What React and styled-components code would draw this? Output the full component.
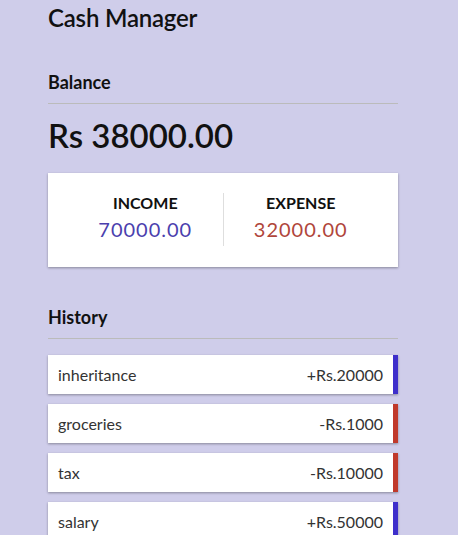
import React from "react";
import styled, { createGlobalStyle } from "styled-components";

const GlobalStyle = createGlobalStyle`
  body {
    margin: 0;
    background-color: #cfcdea;
    font-family: Lato, "Open Sans", sans-serif;
    color: #111;
  }
`;

const Container = styled.div`
  width: 350px;
  margin-left: 48px;
`;

const Header = styled.h2`
  font-size: 24px;
  font-weight: 600;
  margin: 3px 0 0;
  letter-spacing: -0.2px;
`;

const SubTitle = styled.h4`
  font-size: 18px;
  font-weight: 700;
  margin: ${(p) => (p.$first ? "39px" : "39px")} 0 0;
  padding-bottom: 10px;
  border-bottom: 1px solid #bbb;
`;

const Balance = styled.h1`
  font-size: 33px;
  font-weight: 600;
  margin: 11px 0 0;
`;

const Card = styled.div`
  background: #fff;
  box-shadow: 0 1px 3px rgba(0, 0, 0, 0.12), 0 1px 2px rgba(0, 0, 0, 0.24);
  padding: 20px 20px 21px;
  margin-top: 18px;
  display: flex;
  justify-content: space-between;
`;

const Column = styled.div`
  flex: 1;
  text-align: center;
  padding-bottom: 5px;
  & + & {
    border-left: 1px solid #dedede;
  }
`;

const Label = styled.h4`
  margin: 0;
  font-size: 16px;
  font-weight: 700;
  text-transform: uppercase;
`;

const Money = styled.p`
  margin: 5px 0 0;
  font-size: 20px;
  letter-spacing: 1px;
  color: ${(p) => (p.$minus ? "#b0463b" : "#4b3fae")};
`;

const List = styled.ul`
  list-style: none;
  padding: 0;
  margin: 16px 0 0;
`;

const Item = styled.li`
  background: #fff;
  box-shadow: 0 1px 3px rgba(0, 0, 0, 0.12), 0 1px 2px rgba(0, 0, 0, 0.24);
  color: #333;
  display: flex;
  justify-content: space-between;
  align-items: center;
  padding: 10px;
  margin-bottom: 10px;
  font-size: 16px;
  border-right: 5px solid ${(p) => (p.$minus ? "#c0392b" : "#3e2fcb")};
`;

const history = [
  { text: "inheritance", amount: 20000 },
  { text: "groceries", amount: -1000 },
  { text: "tax", amount: -10000 },
  { text: "salary", amount: 50000 },
];

const App = () => {
  return (
    <Container>
      <GlobalStyle />
      <Header>Cash Manager</Header>
      <SubTitle $first>Balance</SubTitle>
      <Balance>Rs 38000.00</Balance>
      <Card>
        <Column>
          <Label>Income</Label>
          <Money>70000.00</Money>
        </Column>
        <Column>
          <Label>Expense</Label>
          <Money $minus>32000.00</Money>
        </Column>
      </Card>
      <SubTitle>History</SubTitle>
      <List>
        {history.map((h) => (
          <Item key={h.text} $minus={h.amount < 0}>
            {h.text}
            <span>
              {h.amount < 0 ? "-" : "+"}Rs.{Math.abs(h.amount)}
            </span>
          </Item>
        ))}
      </List>
    </Container>
  );
};

export default App;
